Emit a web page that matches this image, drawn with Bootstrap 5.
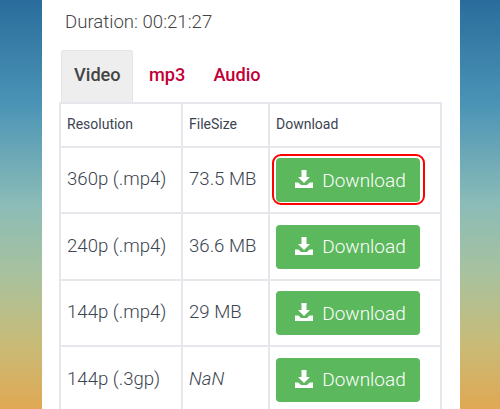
<!DOCTYPE html>
<html lang="en">
<head>
<meta charset="utf-8">
<title>Download</title>
<link href="https://cdn.jsdelivr.net/npm/bootstrap@5.3.0/dist/css/bootstrap.min.css" rel="stylesheet">
<style>
html, body { height: 409px; overflow: hidden; }
body { font-family: Roboto, "Liberation Sans", sans-serif; color: #333;
  background: linear-gradient(180deg, #2a6d9c 0%, #4a93b6 25%, #8bbcb7 50%, #a8c29e 67%, #c8bb78 84%, #e0a853 100%); }
.sheet { width: 418px; height: 409px; margin-left: 42px; background: #fff; padding: 11px 18px 0 17px; }
.duration { font-size: 18.6px; font-weight: 300; line-height: 22px; margin: 0 0 17px 6px; color: #444; }
.tabset { border-bottom: 0; flex-wrap: nowrap; height: 52px; }
.tabset .nav-link { font-size: 18.2px; font-weight: 500; line-height: 22px; color: #c10037; border: 0; padding: 14px 12px 16px 16px; border-radius: 0; height: 52px; }
.tabset .nav-link.active { color: #444; background: #eee; border: 1px solid #e4e4e4; border-bottom: 0; border-radius: 3px 3px 0 0; padding: 13px 11px 16px 12px; width: 72px; margin-left: 2px; margin-right: 0; }
.dltable { width: 383px; table-layout: fixed; border-collapse: collapse; margin: 0; --bs-table-border-color: #e4e4ea; }
.dltable td, .dltable th { border: 2px solid #e6e6ec; padding: 1px 0 0 6px; vertical-align: middle; color: #3b4450; font-size: 18.6px; font-weight: 300; height: 66.5px; }
.dltable th { font-size: 14px; font-weight: 400; height: 43.5px; padding-top: 0; }
.dltable .col-a { width: 122px; }
.dltable .col-b { width: 87px; }
.getbtn { display: flex; align-items: center; justify-content: center; gap: 9px; width: 144px; height: 44px; font-size: 19px; font-weight: 300; background: #5cb85c; border: 0; border-radius: 4px; color: #fff; padding: 1px 0 0 5px; }
.getbtn svg { width: 18px; height: 18px; flex: none; margin-top: -3px; }
.ringed { position: relative; }
.ringed::after { content: ""; position: absolute; inset: -4px -5px -3px -4px; border: 2px solid #f00; border-radius: 9px; }
</style>
</head>
<body>
<div class="sheet">
  <p class="duration">Duration: 00:21:27</p>
  <ul class="nav nav-tabs tabset">
    <li class="nav-item"><a class="nav-link active" href="#">Video</a></li>
    <li class="nav-item"><a class="nav-link" href="#">mp3</a></li>
    <li class="nav-item"><a class="nav-link" href="#">Audio</a></li>
  </ul>
  <table class="table dltable">
    <thead><tr><th class="col-a">Resolution</th><th class="col-b">FileSize</th><th>Download</th></tr></thead>
    <tbody>
      <tr><td>360p (.mp4)</td><td>73.5 MB</td><td><a href="#" class="btn getbtn ringed"><svg viewBox="0 0 18 18" fill="#fff"><path d="M6.500 0h5v7H15l-6 6-6-6h3.500z"/><path d="M0 12.500h3.500L6 15h6l2.500-2.500H18V18H0z"/></svg>Download</a></td></tr>
      <tr><td>240p (.mp4)</td><td>36.6 MB</td><td><a href="#" class="btn getbtn"><svg viewBox="0 0 18 18" fill="#fff"><path d="M6.500 0h5v7H15l-6 6-6-6h3.500z"/><path d="M0 12.500h3.500L6 15h6l2.500-2.500H18V18H0z"/></svg>Download</a></td></tr>
      <tr><td>144p (.mp4)</td><td>29 MB</td><td><a href="#" class="btn getbtn"><svg viewBox="0 0 18 18" fill="#fff"><path d="M6.500 0h5v7H15l-6 6-6-6h3.500z"/><path d="M0 12.500h3.500L6 15h6l2.500-2.500H18V18H0z"/></svg>Download</a></td></tr>
      <tr><td>144p (.3gp)</td><td><em>NaN</em></td><td><a href="#" class="btn getbtn"><svg viewBox="0 0 18 18" fill="#fff"><path d="M6.500 0h5v7H15l-6 6-6-6h3.500z"/><path d="M0 12.500h3.500L6 15h6l2.500-2.500H18V18H0z"/></svg>Download</a></td></tr>
    </tbody>
  </table>
</div>
<script src="https://cdn.jsdelivr.net/npm/bootstrap@5.3.0/dist/js/bootstrap.bundle.min.js"></script>
</body>
</html>
